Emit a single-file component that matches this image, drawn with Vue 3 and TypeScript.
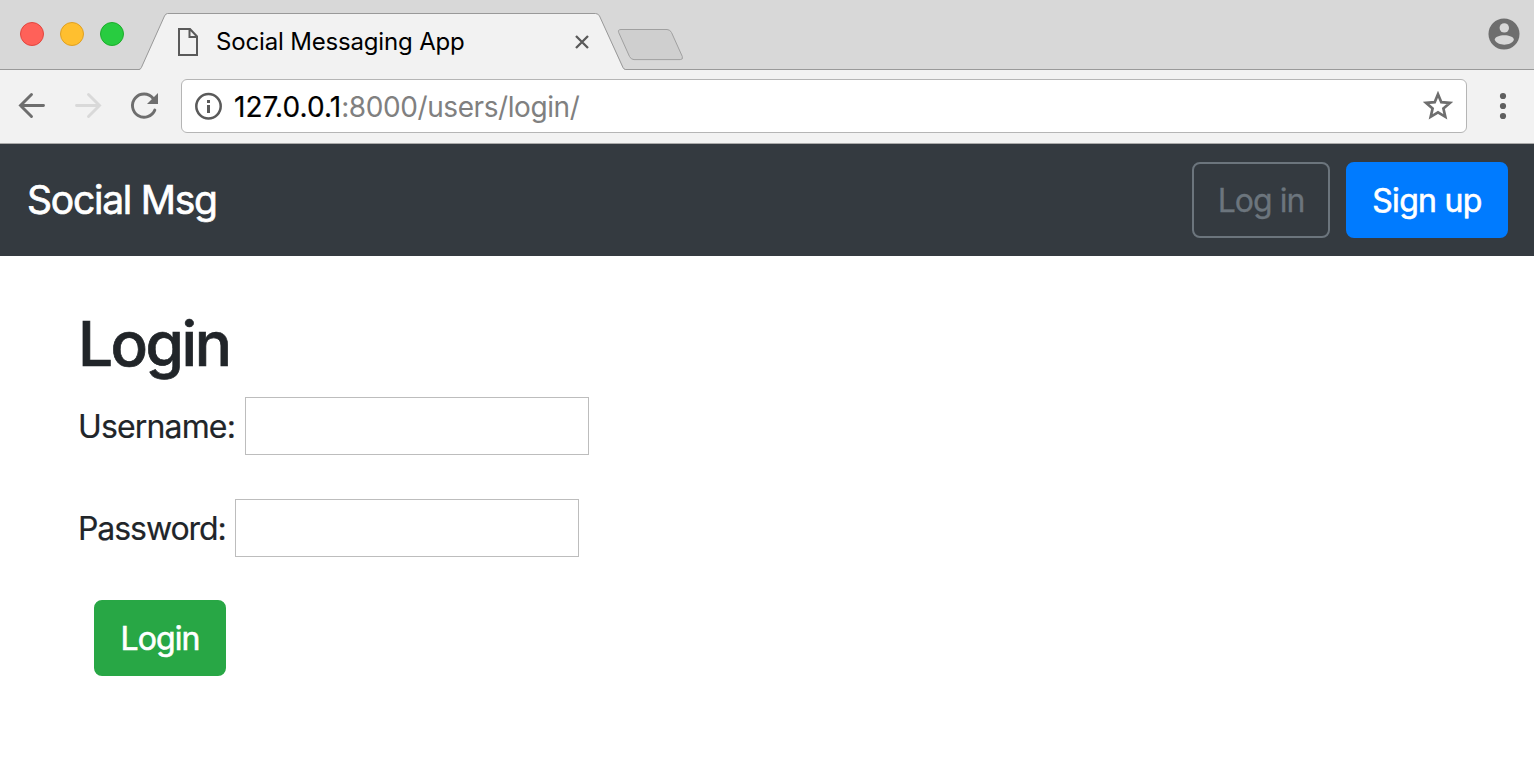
<script setup lang="ts">
import { ref } from 'vue'

interface Field {
  id: string
  label: string
  type: string
}

const tabTitle = 'Social Messaging App'
const host = '127.0.0.1'
const path = ':8000/users/login/'
const fields: Field[] = [
  { id: 'username', label: 'Username:', type: 'text' },
  { id: 'password', label: 'Password:', type: 'password' },
]
const values = ref<Record<string, string>>({ username: '', password: '' })
</script>

<template>
  <div class="window">
    <header class="tabstrip">
      <div class="lights">
        <span class="light close"></span>
        <span class="light minimize"></span>
        <span class="light maximize"></span>
      </div>
      <div class="tab">
        <svg class="tab-shape" width="490" height="57" viewBox="0 0 490 57">
          <path d="M0 57 L2 56.5 Q3 55.8 3.6 54.5 L26.5 3 Q27.8 0.5 29.5 0.5 H457.5 Q460.2 0.5 461.5 3 L484.4 54.5 Q485 55.8 487 56.5 L489 57 Z" fill="#f2f2f2" />
          <path d="M0 56.5 H1 Q2.6 56.3 3.4 54.5 L26.5 3 Q27.8 0.5 29.5 0.5 H457.5 Q460.2 0.5 461.5 3 L485 54.5 Q485.8 56.3 487.5 56.5 H490" fill="none" stroke="#999" />
        </svg>
        <svg class="page-icon" width="20" height="28" viewBox="0 0 20 28">
          <path d="M1 1 H12 L19 8.5 V27 H1 Z M11.5 1 V9 H19" fill="none" stroke="#5a5a5a" stroke-width="2" />
        </svg>
        <span class="tab-title">{{ tabTitle }}</span>
        <svg class="tab-close" width="14" height="14" viewBox="0 0 14 14">
          <path d="M1 1 L13 13 M13 1 L1 13" stroke="#5a5a5a" stroke-width="2.3" />
        </svg>
      </div>
      <svg class="new-tab" width="68" height="34" viewBox="0 0 68 34">
        <path d="M4 2.5 H50 Q53 2.5 54.5 5.5 L65.3 29.5 Q66.3 32.6 63.3 32.6 H17 Q14 32.6 12.5 29.5 L1.7 5.5 Q.6 2.5 4 2.5 Z" fill="#cfcfcf" stroke="#a0a0a0" />
      </svg>
      <svg class="profile" width="32" height="32" viewBox="0 0 32 32">
        <circle cx="16" cy="16" r="15.5" fill="#6e6e6e" />
        <circle cx="16.3" cy="9.9" r="4.7" fill="#d8d8d8" />
        <path d="M6.7 21.8 C7 15.8 25.6 15.8 25.9 21.8 C23 28.3 9.6 28.3 6.7 21.8 Z" fill="#d8d8d8" />
      </svg>
    </header>

    <div class="toolbar">
      <svg class="back" width="28" height="28" viewBox="0 0 28 28">
        <path d="M25.5 13.5 H2.5 M13.5 2.5 L2.5 13.5 L13.5 24.5" fill="none" stroke="#6e6e6e" stroke-width="2.9" stroke-linecap="round" />
      </svg>
      <svg class="forward" width="28" height="28" viewBox="0 0 28 28">
        <path d="M2.5 13.5 H25.5 M14.5 2.5 L25.5 13.5 L14.5 24.5" fill="none" stroke="#d9d9d9" stroke-width="2.9" stroke-linecap="round" />
      </svg>
      <svg class="reload" width="30" height="28" viewBox="0 0 30 28">
        <path d="M24.8 18.1 A11.6 11.6 0 1 1 23 6.2" fill="none" stroke="#6e6e6e" stroke-width="2.9" stroke-linecap="round" />
        <path d="M28 1 V12 H17 Z" fill="#6e6e6e" />
      </svg>
      <div class="address">
        <svg class="info" width="28" height="28" viewBox="0 0 28 28">
          <circle cx="13.5" cy="14.3" r="12.2" fill="none" stroke="#5a5a5a" stroke-width="2.5" />
          <path d="M12 8 H15 V11 H12 Z M12 13 H15 V21 H12 Z" fill="#5a5a5a" />
        </svg>
        <span class="url"><span class="host">{{ host }}</span><span class="path">{{ path }}</span></span>
        <svg class="star" width="30" height="29" viewBox="0 0 30 29">
          <path d="M15 3.2 L18.3 11.2 L26.8 11.9 L20.4 17.5 L22.3 25.8 L15 21.4 L7.7 25.8 L9.6 17.5 L3.2 11.9 L11.7 11.2 Z" fill="none" stroke="#6e6e6e" stroke-width="2.7" />
        </svg>
      </div>
      <svg class="menu" width="8" height="28" viewBox="0 0 8 28">
        <circle cx="4" cy="4" r="3.1" fill="#5f5f5f" />
        <circle cx="4" cy="14" r="3.1" fill="#5f5f5f" />
        <circle cx="4" cy="24" r="3.1" fill="#5f5f5f" />
      </svg>
    </div>

    <nav class="navbar">
      <span class="brand">Social Msg</span>
      <button class="btn outline" type="button"><span>Log in</span></button>
      <button class="btn primary" type="button"><span>Sign up</span></button>
    </nav>

    <main class="content">
      <h1 class="heading">Login</h1>
      <form @submit.prevent>
        <div v-for="field in fields" :key="field.id" class="field">
          <label :for="field.id" :class="['label', field.id]">{{ field.label }}</label>
          <input :id="field.id" v-model="values[field.id]" class="input" :type="field.type" />
        </div>
        <button class="btn success" type="submit"><span>Login</span></button>
      </form>
    </main>
  </div>
</template>

<style>
body {
  margin: 0;
  background: #fff;
}
</style>

<style scoped>
.window {
  height: 778px;
  overflow: hidden;
  background: #fff;
  color: #212529;
  font-family: Inter, "Liberation Sans", sans-serif;
}
.window * {
  box-sizing: border-box;
}
svg {
  display: block;
  flex: none;
}
.tabstrip {
  display: flex;
  height: 70px;
  background: #d8d8d8;
  border-bottom: 1px solid #999;
}
.lights {
  display: flex;
  gap: 16px;
  width: 138px;
  padding: 22px 0 0 20px;
}
.light {
  width: 24px;
  height: 24px;
  border: 1px solid;
  border-radius: 50%;
}
.close {
  background: #ff6159;
  border-color: #e2463f;
}
.minimize {
  background: #ffbf2f;
  border-color: #dfa023;
}
.maximize {
  background: #28cc40;
  border-color: #1dad2b;
}
.tab {
  position: relative;
  display: flex;
  align-items: center;
  width: 488px;
  height: 57px;
  margin-top: 13px;
  padding-left: 40px;
}
.tab-shape {
  position: absolute;
  left: 0;
  top: 0;
}
.page-icon,
.tab-title,
.tab-close {
  position: relative;
}
.tab-title {
  width: 358px;
  padding-left: 18px;
  color: #000;
  font-size: 24px;
  letter-spacing: -0.17px;
  line-height: 56px;
  white-space: nowrap;
}
.tab-close {
  margin-left: 19px;
}
.new-tab {
  margin: 27px 0 0 -9px;
}
.profile {
  margin: 18px 14px 0 auto;
}
.toolbar {
  display: flex;
  align-items: center;
  height: 74px;
  padding: 0 27px 2px 18px;
  background: #f2f2f2;
  border-bottom: 1px solid #aaa;
}
.forward {
  margin-left: 28px;
}
.reload {
  margin-left: 28px;
}
.address {
  display: flex;
  align-items: center;
  width: 1286px;
  height: 54px;
  margin-left: 21px;
  padding: 0 13px;
  background: #fff;
  border: 1px solid #b5b5b5;
  border-radius: 6px;
}
.url {
  flex: 1;
  padding: 2px 0 0 11px;
  font-size: 28px;
  line-height: 50px;
  white-space: nowrap;
}
.host {
  color: #000;
  letter-spacing: 0.08px;
  -webkit-text-stroke: 0.2px #000;
}
.path {
  color: #808080;
  letter-spacing: -0.42px;
}
.menu {
  margin-left: auto;
}
.navbar {
  display: flex;
  align-items: center;
  gap: 16px;
  height: 112px;
  padding: 0 26px 0 27px;
  background: #343a40;
}
.brand {
  margin-right: auto;
  color: #fff;
  font-size: 39px;
  letter-spacing: -1.25px;
  line-height: 60px;
  white-space: nowrap;
  -webkit-text-stroke: 0.7px #fff;
}
.btn {
  display: flex;
  align-items: center;
  justify-content: center;
  height: 76px;
  padding: 2px 0 0;
  border: 2px solid;
  border-radius: 8px;
  font: 400 32px/48px Inter, "Liberation Sans", sans-serif;
  white-space: nowrap;
}
.outline {
  width: 138px;
  background: transparent;
  border-color: #6c757d;
  color: #6c757d;
  letter-spacing: -1px;
  -webkit-text-stroke: 0.3px #6c757d;
}
.primary {
  width: 162px;
  background: #007bff;
  border-color: #007bff;
  color: #fff;
  letter-spacing: -0.7px;
  -webkit-text-stroke: 0.6px #fff;
}
.content {
  padding: 49px 78px 0;
}
.heading {
  margin: 0;
  font-size: 62px;
  font-weight: 500;
  letter-spacing: -2.45px;
  line-height: 77px;
  height: 92px;
  -webkit-text-stroke: 0.7px #212529;
}
.field {
  display: flex;
  align-items: center;
  height: 58px;
  margin-bottom: 44px;
}
.label {
  padding-top: 2px;
  font-size: 32px;
  line-height: 48px;
  white-space: nowrap;
  -webkit-text-stroke: 0.2px #212529;
}
.username {
  width: 167px;
  letter-spacing: -0.85px;
}
.password {
  width: 157px;
  letter-spacing: -1.07px;
}
.input {
  width: 344px;
  height: 58px;
  padding: 2px 6px;
  background: #fff;
  border: 1px solid #bdbdbd;
  outline: none;
  font: 32px Inter, "Liberation Sans", sans-serif;
}
.success {
  width: 132px;
  margin: -1px 0 0 16px;
  background: #28a745;
  border-color: #28a745;
  color: #fff;
  letter-spacing: -0.95px;
  -webkit-text-stroke: 0.6px #fff;
}
</style>
